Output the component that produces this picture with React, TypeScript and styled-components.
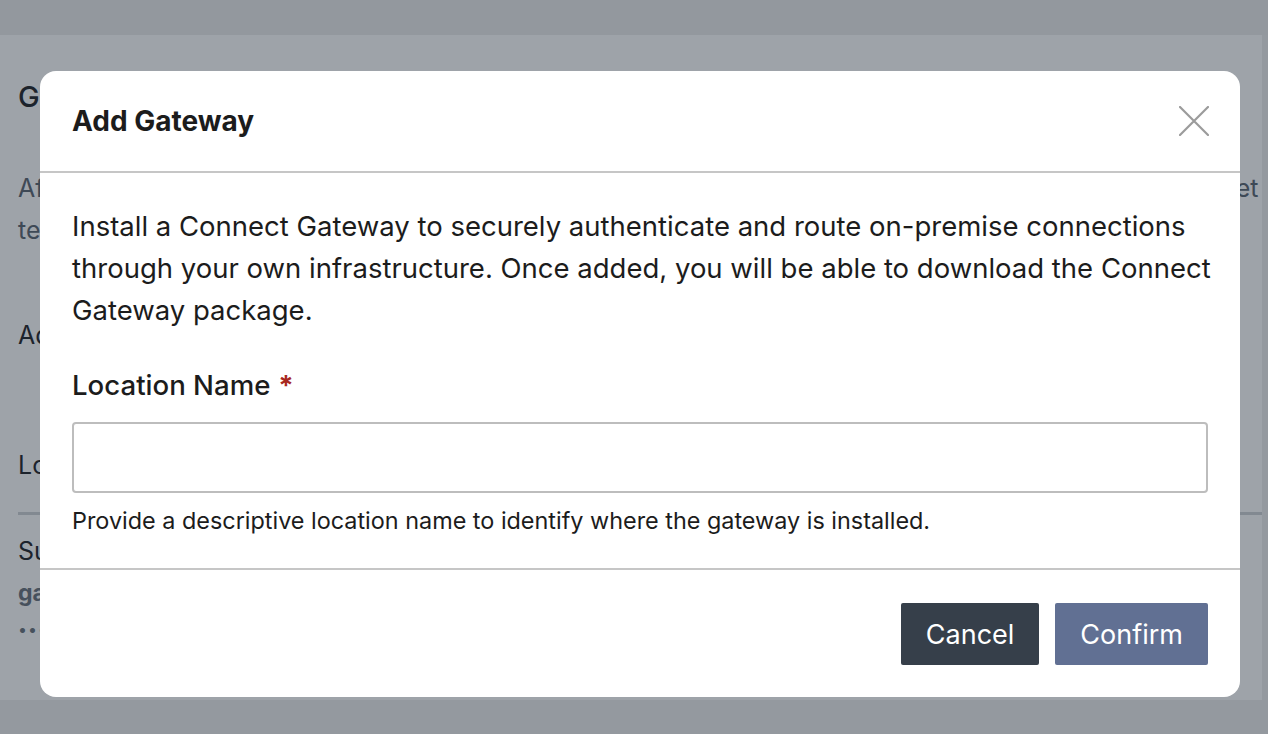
import React from "react";
import styled, { createGlobalStyle } from "styled-components";

const FONT = `"Inter", "Noto Sans", sans-serif`;

const Global = createGlobalStyle`
  html, body { margin: 0; padding: 0; }
  body { font-family: ${FONT}; background: #f1f2f3; }
  * { box-sizing: border-box; }
`;

const Page = styled.div`
  width: 1268px;
  height: 734px;
  overflow: hidden;
  position: relative;
  display: flex;
  flex-direction: column;
  background: #eeeeee;
`;

const TopBar = styled.div`
  height: 35px;
  flex: none;
  background: #ececec;
`;

const Content = styled.main`
  flex: none;
  height: 665px;
  margin-right: 6px;
  background: #ffffff;
  padding: 0 0 0 18px;
  display: flex;
  flex-direction: column;
  overflow: hidden;
  white-space: nowrap;
`;

const PageTitle = styled.h1`
  margin: 44px 0 0;
  font-size: 29px;
  font-weight: 500;
  line-height: 36px;
  color: #1f2329;
`;

const PageText = styled.p`
  margin: 52px 0 0;
  font-size: 25px;
  line-height: 42px;
  color: #5b6470;
`;

const SectionLabel = styled.div<{ $top: number }>`
  margin-top: ${(p) => p.$top}px;
  font-size: 25px;
  line-height: 36px;
  color: #1f2329;
`;

const Rule = styled.div`
  margin-top: 29px;
  height: 3px;
  background: #cfd2d6;
`;

const Mono = styled.div`
  margin-top: 6px;
  font-size: 23px;
  font-weight: 700;
  line-height: 36px;
  color: #6a727c;
`;

const Dots = styled.div`
  margin-top: 8px;
  font-size: 16px;
  line-height: 20px;
  letter-spacing: 1px;
  color: #6a727c;
`;

const Overlay = styled.div`
  position: absolute;
  inset: 0;
  background: rgba(25, 35, 50, 0.42);
  display: flex;
  justify-content: flex-start;
  align-items: flex-start;
  padding: 71px 0 0 40px;
`;

const Modal = styled.div`
  width: 1200px;
  background: #ffffff;
  border-radius: 16px;
  display: flex;
  flex-direction: column;
  overflow: hidden;
`;

const Header = styled.header`
  height: 102px;
  padding: 0 32px;
  display: flex;
  align-items: center;
  justify-content: space-between;
  border-bottom: 2px solid #c6c6c6;
`;

const Title = styled.h2`
  margin: 0;
  font-size: 28px;
  font-weight: 700;
  color: #1c1c1c;
`;

const CloseButton = styled.button`
  width: 32px;
  height: 32px;
  margin-right: -2px;
  padding: 0;
  border: none;
  background: transparent;
  display: flex;
  align-items: center;
  justify-content: center;
  cursor: pointer;
`;

const Body = styled.section`
  padding: 32px 32px 32px;
  display: flex;
  flex-direction: column;
`;

const Description = styled.p`
  margin: 0;
  font-size: 27.5px;
  line-height: 42px;
  white-space: nowrap;
  color: #1c1c1c;
`;

const Label = styled.label`
  margin-top: 33px;
  font-size: 27.6px;
  font-weight: 500;
  line-height: 42px;
  color: #1c1c1c;
`;

const Required = styled.span`
  color: #a8281e;
  font-weight: 700;
  margin-left: 8px;
`;

const Input = styled.input`
  margin-top: 16px;
  height: 71px;
  width: 100%;
  border: 2px solid #bdbdbd;
  border-radius: 4px;
  padding: 0 16px;
  font-family: ${FONT};
  font-size: 24px;
  outline: none;
`;

const Help = styled.div`
  margin-top: 13px;
  font-size: 23.4px;
  line-height: 30px;
  color: #1c1c1c;
`;

const Footer = styled.footer`
  border-top: 2px solid #c6c6c6;
  padding: 33px 32px 32px;
  display: flex;
  justify-content: flex-end;
  gap: 16px;
`;

const Button = styled.button<{ $variant: "dark" | "primary" }>`
  height: 62px;
  padding: 0 25px;
  border: none;
  border-radius: 2px;
  font-family: ${FONT};
  font-size: 27px;
  color: #ffffff;
  background: ${(p) => (p.$variant === "dark" ? "#363f4a" : "#617093")};
  cursor: pointer;
`;

export default function App() {
  return (
    <>
      <Global />
      <Page>
        <TopBar />
        <Content>
          <PageTitle>Gateways</PageTitle>
          <PageText>
            After installing a gateway, its connections are routed through your network. Download the package to get
            <br />
            tell users which gateway to use for on-premise resources.
          </PageText>
          <SectionLabel $top={66}>Add a gateway</SectionLabel>
          <SectionLabel $top={94}>Location</SectionLabel>
          <Rule />
          <SectionLabel $top={18}>Sunnyvale Office</SectionLabel>
          <Mono>gateway-01</Mono>
          <Dots>•••••••</Dots>
        </Content>
        <Overlay>
          <Modal role="dialog" aria-labelledby="add-gateway-title">
            <Header>
              <Title id="add-gateway-title">Add Gateway</Title>
              <CloseButton aria-label="Close">
                <svg width="30" height="30" viewBox="0 0 30 30" fill="none">
                  <path d="M1 1 L29 29 M29 1 L1 29" stroke="#9b9b9b" strokeWidth="2.2" strokeLinecap="round" />
                </svg>
              </CloseButton>
            </Header>
            <Body>
              <Description>
                Install a Connect Gateway to securely authenticate and route on-premise connections
                <br />
                through your own infrastructure. Once added, you will be able to download the Connect
                <br />
                Gateway package.
              </Description>
              <Label htmlFor="location-name">
                Location Name<Required>*</Required>
              </Label>
              <Input id="location-name" type="text" />
              <Help>Provide a descriptive location name to identify where the gateway is installed.</Help>
            </Body>
            <Footer>
              <Button $variant="dark">Cancel</Button>
              <Button $variant="primary">Confirm</Button>
            </Footer>
          </Modal>
        </Overlay>
      </Page>
    </>
  );
}
